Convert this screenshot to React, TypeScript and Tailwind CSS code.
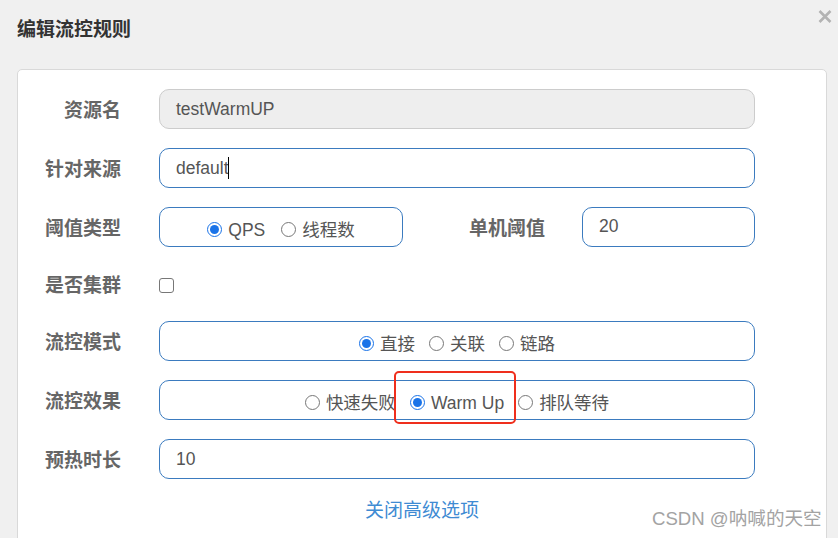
import React from "react";

const FONT = { fontFamily: '"Liberation Sans", "Noto Sans CJK SC", Arial, sans-serif' };

function Radio({ checked, label }: { checked?: boolean; label: string }) {
  return (
    <span className="flex items-center">
      {checked ? (
        <span className="flex h-[15px] w-[15px] items-center justify-center rounded-full border-[1.5px] border-[#1a73e8] bg-white">
          <span className="h-[9px] w-[9px] rounded-full bg-[#1a73e8]" />
        </span>
      ) : (
        <span className="h-[15px] w-[15px] rounded-full border border-[#777] bg-white" />
      )}
      <span className="ml-[6px] pt-[3px] text-[17.5px] leading-none text-[#555]">{label}</span>
    </span>
  );
}

function Label({ children, w = "w-[103px]" }: { children: React.ReactNode; w?: string }) {
  return (
    <div className={`${w} shrink-0 pt-[4px] text-right text-[19px] font-bold text-[#666]`}>{children}</div>
  );
}

function Row({ children, h = "h-[40px]" }: { children: React.ReactNode; h?: string }) {
  return <div className={`flex ${h} items-center`}>{children}</div>;
}

export default function App() {
  return (
    <div className="relative h-[538px] w-[838px] overflow-hidden bg-[#f0f0f0]" style={FONT}>
      <div className="flex h-[69px] items-start justify-between">
        <div className="pl-[17px] pt-[18px] text-[19px] font-bold leading-[24px] text-[#333]">编辑流控规则</div>
        <svg className="mr-[6px] mt-[10px]" width="14" height="13" viewBox="0 0 14 13">
          <path d="M1.5 1 L12.5 12 M12.5 1 L1.5 12" stroke="#b3b3b3" strokeWidth="2.6" strokeLinecap="butt" />
        </svg>
      </div>
      <div className="ml-[17px] mr-[11px] h-[500px] rounded-[5px] border border-[#d9d9d9] bg-white pt-[19px]">
        <div className="flex flex-col gap-[19px]">
          <Row>
            <Label>资源名</Label>
            <div className="ml-[38px] flex h-[40px] w-[596px] items-center rounded-[10px] border border-[#ccc] bg-[#eee] pl-[16px] text-[17.5px] text-[#555]">
              testWarmUP
            </div>
          </Row>
          <Row>
            <Label>针对来源</Label>
            <div className="ml-[38px] flex h-[40px] w-[596px] items-center rounded-[10px] border border-[#3b7bbf] bg-white pl-[16px] text-[17.5px] text-[#555]">
              default<span className="ml-[-1px] h-[22px] w-px bg-black" />
            </div>
          </Row>
          <Row>
            <Label>阈值类型</Label>
            <div className="ml-[38px] flex h-[40px] w-[244px] items-center justify-center gap-[16px] rounded-[10px] border border-[#3b7bbf] bg-white pt-[4px]">
              <Radio checked label="QPS" />
              <Radio label="线程数" />
            </div>
            <Label w="w-[142px]">单机阈值</Label>
            <div className="ml-[37px] flex h-[40px] w-[173px] items-center rounded-[10px] border border-[#3b7bbf] bg-white pb-[2px] pl-[16px] text-[17.5px] text-[#555]">
              20
            </div>
          </Row>
          <Row h="h-[36px]">
            <Label>是否集群</Label>
            <span className="ml-[38px] mt-[2px] h-[15px] w-[15px] rounded-[3px] border border-[#777] bg-white" />
          </Row>
          <Row>
            <Label>流控模式</Label>
            <div className="ml-[38px] flex h-[40px] w-[596px] items-center justify-center gap-[14px] rounded-[10px] border border-[#3b7bbf] bg-white pt-[4px]">
              <Radio checked label="直接" />
              <Radio label="关联" />
              <Radio label="链路" />
            </div>
          </Row>
          <Row>
            <Label>流控效果</Label>
            <div className="ml-[38px] flex h-[40px] w-[596px] items-center justify-center gap-[14px] rounded-[10px] border border-[#3b7bbf] bg-white pt-[4px]">
              <Radio label="快速失败" />
              <Radio checked label="Warm Up" />
              <Radio label="排队等待" />
            </div>
          </Row>
          <Row>
            <Label>预热时长</Label>
            <div className="ml-[38px] flex h-[40px] w-[596px] items-center rounded-[10px] border border-[#3b7bbf] bg-white pl-[16px] text-[17.5px] text-[#555]">
              10
            </div>
          </Row>
        </div>
        <div className="mt-[20px] text-center text-[19px] leading-[24px] text-[#3f8bd3]">关闭高级选项</div>
      </div>
      <div className="absolute left-[394px] top-[371px] h-[53px] w-[122px] rounded-[5px] border-[2.5px] border-[#ef2f1d]" />
      <div className="absolute left-[652px] top-[507px] text-[18.6px] leading-[24px] text-[#a3a3a3]">CSDN @呐喊的天空</div>
    </div>
  );
}
